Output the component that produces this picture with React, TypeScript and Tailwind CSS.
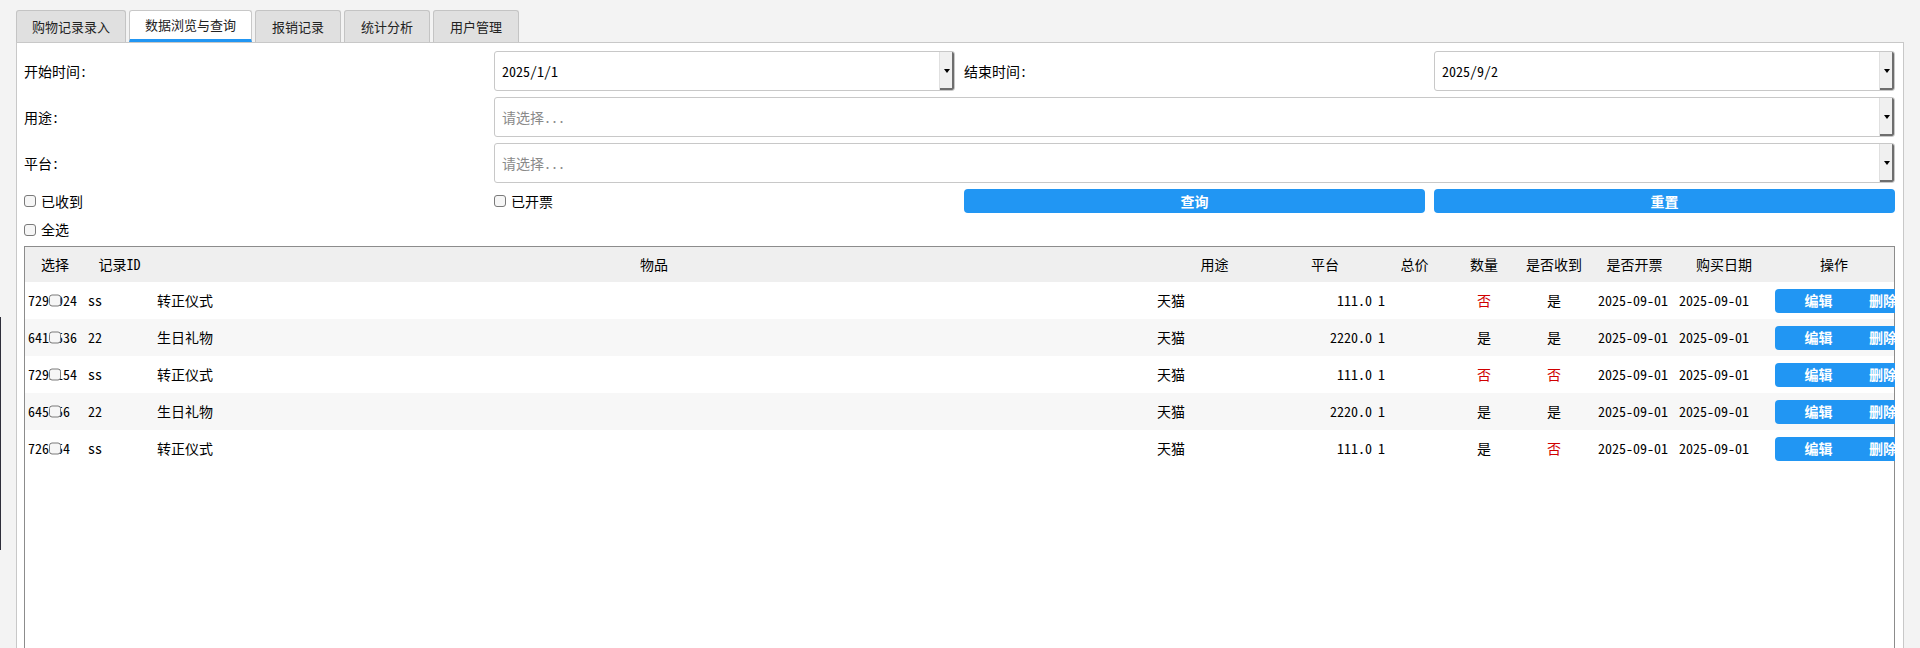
import React from 'react';

interface Row {
  id: string;
  tag: string;
  item: string;
  platform: string;
  price: string;
  qty: string;
  a: string;
  b: string;
  d1: string;
  d2: string;
}

const rows: Row[] = [
  { id: '7290024', tag: 'ss', item: '转正仪式', platform: '天猫', price: '111.0', qty: '1', a: '否', b: '是', d1: '2025-09-01', d2: '2025-09-01' },
  { id: '6410536', tag: '22', item: '生日礼物', platform: '天猫', price: '2220.0', qty: '1', a: '是', b: '是', d1: '2025-09-01', d2: '2025-09-01' },
  { id: '7291154', tag: 'ss', item: '转正仪式', platform: '天猫', price: '111.0', qty: '1', a: '否', b: '否', d1: '2025-09-01', d2: '2025-09-01' },
  { id: '645056', tag: '22', item: '生日礼物', platform: '天猫', price: '2220.0', qty: '1', a: '是', b: '是', d1: '2025-09-01', d2: '2025-09-01' },
  { id: '726054', tag: 'ss', item: '转正仪式', platform: '天猫', price: '111.0', qty: '1', a: '是', b: '否', d1: '2025-09-01', d2: '2025-09-01' },
];

const tabs = [
  { label: '购物记录录入', w: 'w-[110px]' },
  { label: '数据浏览与查询', w: 'w-[123px]', active: true },
  { label: '报销记录', w: 'w-[86px]' },
  { label: '统计分析', w: 'w-[86px]' },
  { label: '用户管理', w: 'w-[86px]' },
];

const headers = ['选择', '记录ID', '物品', '用途', '平台', '总价', '数量', '是否收到', '是否开票', '购买日期', '操作'];

const cols = 'grid grid-cols-[60px_69px_1000px_121px_100px_79px_60px_80px_81px_98px_122px]';

const Box = () => (
  <span className="inline-block h-[12px] w-[12px] shrink-0 rounded-[3px] border border-[#7a7a7a] bg-[#f6f6f6]" />
);

const Combo = ({ value, placeholder }: { value?: string; placeholder?: string }) => (
  <div className="flex h-[40px] items-stretch overflow-hidden rounded-[3px] border border-[#c8c8c8] bg-white">
    <div className="flex flex-1 items-center pl-[7px]">
      {value ? <span>{value}</span> : <span className="text-[#8a8a8a]">{placeholder}</span>}
    </div>
    <div className="flex w-[15px] items-center justify-center border-l border-[#e0e0e0] bg-[#f0f0f0] shadow-[inset_-2px_-2px_0_#6e6e6e]">
      <span className="mb-[1px] mr-[1px] h-0 w-0 border-x-[3px] border-t-[4px] border-x-transparent border-t-black" />
    </div>
  </div>
);

const Check = ({ label }: { label: string }) => (
  <div className="flex items-center gap-[5px]">
    <Box />
    <span>{label}</span>
  </div>
);

const YesNo = ({ v }: { v: string }) => (
  <span className={v === '否' ? 'text-[#d00000]' : 'text-black'}>{v}</span>
);

export default function App() {
  return (
    <div className="relative h-[648px] w-[1920px] overflow-hidden bg-[#f3f3f3] pt-[10px] font-['Noto_Sans_Mono_CJK_SC','Noto_Sans_CJK_SC',sans-serif] text-[14px] text-black">
      {/* tabs */}
      <div className="flex items-end gap-[3px] pl-[16px]">
        {tabs.map(t => (
          <div
            key={t.label}
            className={
              t.active
                ? `${t.w} flex h-[32px] items-center justify-center rounded-t-[3px] border-x border-t border-[#c8c8c8] border-b-[3px] border-b-[#2196f3] bg-white text-[13px] text-[#222]`
                : `${t.w} flex h-[32px] items-center justify-center rounded-t-[3px] border-x border-t border-[#c4c4c4] bg-[#e0e0e0] text-[13px] text-[#222]`
            }
          >
            {t.label}
          </div>
        ))}
      </div>

      {/* panel */}
      <div className="mx-[16px] flex h-[640px] flex-col border border-[#c8c8c8] bg-white pl-[7px] pr-[8px] pt-[8px]">
        <div className="grid grid-cols-4 gap-x-[9px] gap-y-[6px]">
          <div className="flex h-[40px] items-center">开始时间:</div>
          <Combo value="2025/1/1" />
          <div className="flex h-[40px] items-center">结束时间:</div>
          <Combo value="2025/9/2" />

          <div className="flex h-[40px] items-center">用途:</div>
          <div className="col-span-3">
            <Combo placeholder="请选择..." />
          </div>

          <div className="flex h-[40px] items-center">平台:</div>
          <div className="col-span-3">
            <Combo placeholder="请选择..." />
          </div>

          <div className="flex h-[24px] items-center">
            <Check label="已收到" />
          </div>
          <div className="flex h-[24px] items-center">
            <Check label="已开票" />
          </div>
          <div className="flex h-[24px] items-center justify-center rounded-[4px] bg-[#2196f3] font-bold text-white">查询</div>
          <div className="flex h-[24px] items-center justify-center rounded-[4px] bg-[#2196f3] font-bold text-white">重置</div>

          <div className="flex h-[21px] items-center">
            <Check label="全选" />
          </div>
        </div>

        {/* table */}
        <div className="mt-[6px] flex-1 border-x border-t border-[#8c8c8c]">
          <div className={`${cols} h-[35px] items-center bg-[#efefef]`}>
            {headers.map(h => (
              <div key={h} className="text-center">
                {h}
              </div>
            ))}
          </div>
          {rows.map((r, i) => (
            <div key={i} className={`${cols} h-[37px] items-center ${i % 2 ? 'bg-[#f7f7f7]' : 'bg-white'}`}>
              <div className="relative overflow-hidden pl-[3px]">
                <span>{r.id}</span>
                <span className="absolute left-[24px] top-1/2 -translate-y-1/2">
                  <Box />
                </span>
              </div>
              <div className="pl-[3px]">{r.tag}</div>
              <div className="pl-[3px]">{r.item}</div>
              <div className="pl-[3px]">{r.platform}</div>
              <div className="pr-[3px] text-right">{r.price}</div>
              <div className="pl-[3px]">{r.qty}</div>
              <div className="text-center">
                <YesNo v={r.a} />
              </div>
              <div className="text-center">
                <YesNo v={r.b} />
              </div>
              <div className="pl-[4px]">{r.d1}</div>
              <div className="pl-[4px]">{r.d2}</div>
              <div className="overflow-hidden pl-[2px]">
                <div className="flex h-[24px] w-[190px] rounded-[4px] bg-[#2196f3] font-bold text-white">
                  <div className="flex w-[87px] items-center justify-center">编辑</div>
                  <div className="flex items-center pl-[7px]">删除</div>
                </div>
              </div>
            </div>
          ))}
        </div>
      </div>

      {/* stray edge of a window behind */}
      <div className="absolute left-0 top-[317px] h-[233px] w-px bg-[#2e2e3a]" />
    </div>
  );
}
